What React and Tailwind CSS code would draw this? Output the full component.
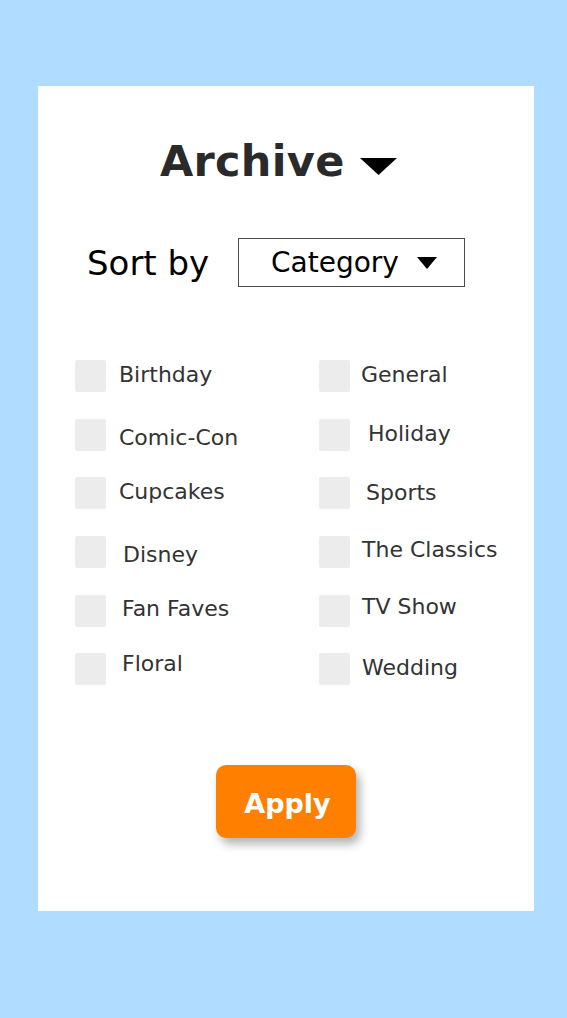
import React from "react";

const left = [
  { label: "Birthday", ml: "ml-[13px]", mt: "mt-[4px]" },
  { label: "Comic-Con", ml: "ml-[13px]", mt: "mt-[8px]" },
  { label: "Cupcakes", ml: "ml-[13px]", mt: "mt-[4px]" },
  { label: "Disney", ml: "ml-[17px]", mt: "mt-[8px]" },
  { label: "Fan Faves", ml: "ml-[16px]", mt: "mt-[3px]" },
  { label: "Floral", ml: "ml-[16px]", mt: "mt-[0px]" },
];
const right = [
  { label: "General", ml: "ml-[11px]", mt: "mt-[4px]" },
  { label: "Holiday", ml: "ml-[18px]", mt: "mt-[4px]" },
  { label: "Sports", ml: "ml-[16px]", mt: "mt-[5px]" },
  { label: "The Classics", ml: "ml-[12px]", mt: "mt-[3px]" },
  { label: "TV Show", ml: "ml-[12px]", mt: "mt-[1px]" },
  { label: "Wedding", ml: "ml-[12px]", mt: "mt-[4px]" },
];

function Item({ item }) {
  return (
    <div className="flex items-start h-[32px]">
      <div className="w-[31px] h-[32px] shrink-0 rounded-[2px] bg-[#ececec]" />
      <span className={`${item.ml} ${item.mt} text-[22px] leading-[22px] text-[#333333] whitespace-nowrap`}>
        {item.label}
      </span>
    </div>
  );
}

export default function App() {
  return (
    <div
      className="min-h-[1018px] w-full bg-[#b0dcff] pt-[86px] pl-[38px]"
      style={{ fontFamily: '"DejaVu Sans", Verdana, sans-serif' }}
    >
      <div className="w-[496px] h-[825px] bg-white flex flex-col pt-[54px]">
        <div className="flex items-start pl-[122px]">
          <h1 className="text-[43px] leading-[43px] font-bold tracking-[0.3px] text-[#2a2a2a]">Archive</h1>
          <svg className="ml-[15px] mt-[18px]" width="37" height="17" viewBox="0 0 37 17">
            <polygon points="0,0 37,0 18.5,17" fill="#000" />
          </svg>
        </div>

        <div className="flex items-start pl-[49px] mt-[55px]">
          <span className="w-[151px] mt-[8px] text-[34px] leading-[34px] text-black whitespace-nowrap">Sort by</span>
          <div className="w-[227px] h-[49px] border border-[#4a4a4a] flex items-center pl-[32px]">
            <span className="text-[28px] leading-[28px] text-black">Category</span>
            <svg className="ml-[18px]" width="20" height="12" viewBox="0 0 20 12">
              <polygon points="0,0 20,0 10,12" fill="#000" />
            </svg>
          </div>
        </div>

        <div className="grid grid-cols-[244px_1fr] pl-[37px] mt-[73px] gap-y-[26.7px]">
          {left.map((l, i) => (
            <React.Fragment key={i}>
              <Item item={l} />
              <Item item={right[i]} />
            </React.Fragment>
          ))}
        </div>

        <div className="flex justify-center mt-[80px]">
          <button className="w-[140px] h-[73px] pt-[5px] pl-[3px] rounded-[10px] bg-[#ff7f00] text-white text-[27px] font-bold shadow-[4px_6px_10px_rgba(0,0,0,0.3)]">
            Apply
          </button>
        </div>
      </div>
    </div>
  );
}
